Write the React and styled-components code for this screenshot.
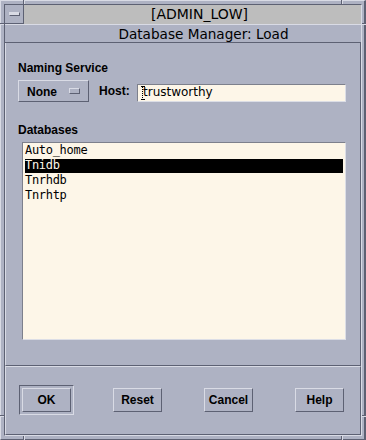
import React from "react";
import styled, { createGlobalStyle } from "styled-components";

const BG = "#aeb2c3";
const LIGHT = "#d9dbe5";
const DARK = "#5d6173";
const TITLE = "#bdbdbd";
const FIELD = "#fdf6e8";
const FIELD_DARK = "#7d808c";
const FIELD_LIGHT = "#dcdee6";

const GlobalStyle = createGlobalStyle`
  html, body { margin: 0; padding: 0; background: ${BG}; }
  #root { width: 366px; height: 440px; }
  * { box-sizing: border-box; }
`;

const Window = styled.div`
  position: relative;
  width: 366px;
  height: 440px;
  background: ${BG};
  border-style: solid;
  border-width: 1px 2px 1px 1px;
  border-color: ${LIGHT} ${DARK} ${DARK} ${LIGHT};
  padding: 3px 2px 3px 3px;
  display: flex;
  color: #000;
`;

const Tick = styled.div`
  position: absolute;
  left: ${(p) => p.$x}px;
  top: ${(p) => p.$y}px;
  background: ${LIGHT};
  ${(p) =>
    p.$vertical
      ? `width: 2px; height: 4px; border-left: 1px solid ${DARK};`
      : `width: 4px; height: 2px; border-top: 1px solid ${DARK};`}
`;

const Inner = styled.div`
  flex: 1;
  display: flex;
  flex-direction: column;
  border: 1px solid;
  border-color: ${DARK} ${LIGHT} ${LIGHT} ${DARK};
`;

const TitleRow = styled.div`
  display: flex;
  height: 20px;
  border-bottom: 1px solid ${LIGHT};
`;

const MenuButton = styled.div`
  width: 19px;
  height: 19px;
  border-right: 1px solid ${DARK};
  border-bottom: 1px solid ${DARK};
  display: flex;
  align-items: center;
  justify-content: center;
  padding: 0 0 1px 1px;
`;

const MenuGlyph = styled.div`
  width: 11px;
  height: 4px;
  background: ${LIGHT};
  border-style: solid;
  border-width: 1px;
  border-color: ${LIGHT} ${DARK} ${DARK} ${LIGHT};
`;

const TitleBar = styled.div`
  flex: 1;
  background: ${TITLE};
  display: flex;
  align-items: center;
  justify-content: center;
  padding-left: 14px;
  font: 14px "DejaVu Sans", sans-serif;
  line-height: 17px;
`;

const SubTitle = styled.div`
  height: 18px;
  border-bottom: 1px solid ${DARK};
  display: flex;
  align-items: center;
  justify-content: center;
  padding: 1px 0 0 41px;
  font: 13.6px "DejaVu Sans", sans-serif;
  line-height: 16px;
`;

const ContentPanel = styled.div`
  flex: 1;
  display: flex;
  flex-direction: column;
  border-left: 1px solid ${LIGHT};
  border-right: 1px solid ${DARK};
  border-bottom: 1px solid ${DARK};
  padding: 18px 14px 0 12px;
`;

const Label = styled.div`
  font: bold 12px "Liberation Sans", Arial, sans-serif;
  line-height: 14px;
  margin-top: ${(p) => p.$top || 0}px;
`;

const ServiceRow = styled.div`
  display: flex;
  align-items: center;
  height: 22px;
  margin-top: 5px;
`;

const OptionButton = styled.div`
  width: 71px;
  height: 22px;
  display: flex;
  align-items: center;
  justify-content: space-between;
  padding: 1px 8px 0 8px;
  border-style: solid;
  border-width: 1px;
  border-color: ${LIGHT} ${DARK} ${DARK} ${LIGHT};
  font: bold 12px "Liberation Sans", Arial, sans-serif;
  line-height: 14px;
`;

const OptionIndicator = styled.div`
  width: 11px;
  height: 6px;
  margin-top: -1px;
  border-style: solid;
  border-width: 1px;
  border-color: ${LIGHT} ${DARK} ${DARK} ${LIGHT};
`;

const HostLabel = styled(Label)`
  margin-left: 10px;
`;

const TextField = styled.div`
  position: relative;
  width: 209px;
  height: 18px;
  margin-left: auto;
  align-self: flex-end;
  background: ${FIELD};
  border-style: solid;
  border-width: 1px;
  border-color: ${FIELD_DARK} ${FIELD_LIGHT} ${FIELD_LIGHT} ${FIELD_DARK};
  padding-left: 5px;
  font: 12px "DejaVu Sans", sans-serif;
  line-height: 14px;
`;

const Caret = styled.svg`
  position: absolute;
  left: 3px;
  top: 1px;
`;

const ListBox = styled.div`
  height: 198px;
  margin: 5px 0 0 4px;
  background: ${FIELD};
  border-style: solid;
  border-width: 1px;
  border-color: ${FIELD_DARK} ${FIELD_LIGHT} ${FIELD_LIGHT} ${FIELD_DARK};
  padding: 1px 2px;
  display: flex;
  flex-direction: column;
  gap: 1px;
`;

const ListItem = styled.div`
  position: relative;
  z-index: ${(p) => (p.$selected ? 0 : 1)};
  height: 14px;
  font: 12px "DejaVu Sans Mono", monospace;
  letter-spacing: -0.3px;
  line-height: 13px;
  background: ${(p) => (p.$selected ? "#000" : "transparent")};
  color: ${(p) => (p.$selected ? FIELD : "#000")};
`;

const ButtonPanel = styled.div`
  height: 69px;
  display: flex;
  gap: 36px;
  padding: 18px 0 0 13px;
  border-style: solid;
  border-width: 1px;
  border-color: ${LIGHT} ${DARK} ${DARK} ${LIGHT};
`;

const ButtonSlot = styled.div`
  width: 55px;
  height: 30px;
  display: flex;
  align-items: center;
  justify-content: center;
  border: 1px solid transparent;
  ${(p) =>
    p.$default &&
    `border-color: ${DARK} ${LIGHT} ${LIGHT} ${DARK};`}
`;

const PushButton = styled.div`
  width: 49px;
  height: 24px;
  display: flex;
  align-items: center;
  justify-content: center;
  border-style: solid;
  border-width: 1px;
  border-color: ${LIGHT} ${DARK} ${DARK} ${LIGHT};
  font: bold 12px "Liberation Sans", Arial, sans-serif;
  line-height: 14px;
`;

const databases = ["Auto_home", "Tnidb", "Tnrhdb", "Tnrhtp"];
const buttons = ["OK", "Reset", "Cancel", "Help"];

export default function App() {
  return (
    <>
      <GlobalStyle />
      <Window>
        <Tick $vertical $x={22} $y={-1} />
        <Tick $vertical $x={340} $y={-1} />
        <Tick $vertical $x={22} $y={435} />
        <Tick $vertical $x={340} $y={435} />
        <Tick $x={-1} $y={22} />
        <Tick $x={-1} $y={414} />
        <Tick $x={361} $y={22} />
        <Tick $x={361} $y={414} />
        <Inner>
          <TitleRow>
            <MenuButton>
              <MenuGlyph />
            </MenuButton>
            <TitleBar>[ADMIN_LOW]</TitleBar>
          </TitleRow>
          <SubTitle>Database Manager: Load</SubTitle>
          <ContentPanel>
            <Label>Naming Service</Label>
            <ServiceRow>
              <OptionButton>
                <span>None</span>
                <OptionIndicator />
              </OptionButton>
              <HostLabel>Host:</HostLabel>
              <TextField>
                <Caret width="4" height="14" viewBox="0 0 4 14">
                  <path d="M0 0.5H4M0 13.5H4" stroke="#000" strokeWidth="1" />
                  <path
                    d="M1.5 1V13"
                    stroke="#000"
                    strokeWidth="1"
                    strokeDasharray="1 1"
                  />
                </Caret>
                trustworthy
              </TextField>
            </ServiceRow>
            <Label $top={21}>Databases</Label>
            <ListBox>
              {databases.map((d) => (
                <ListItem key={d} $selected={d === "Tnidb"}>
                  {d}
                </ListItem>
              ))}
            </ListBox>
          </ContentPanel>
          <ButtonPanel>
            {buttons.map((b) => (
              <ButtonSlot key={b} $default={b === "OK"}>
                <PushButton>{b}</PushButton>
              </ButtonSlot>
            ))}
          </ButtonPanel>
        </Inner>
      </Window>
    </>
  );
}
